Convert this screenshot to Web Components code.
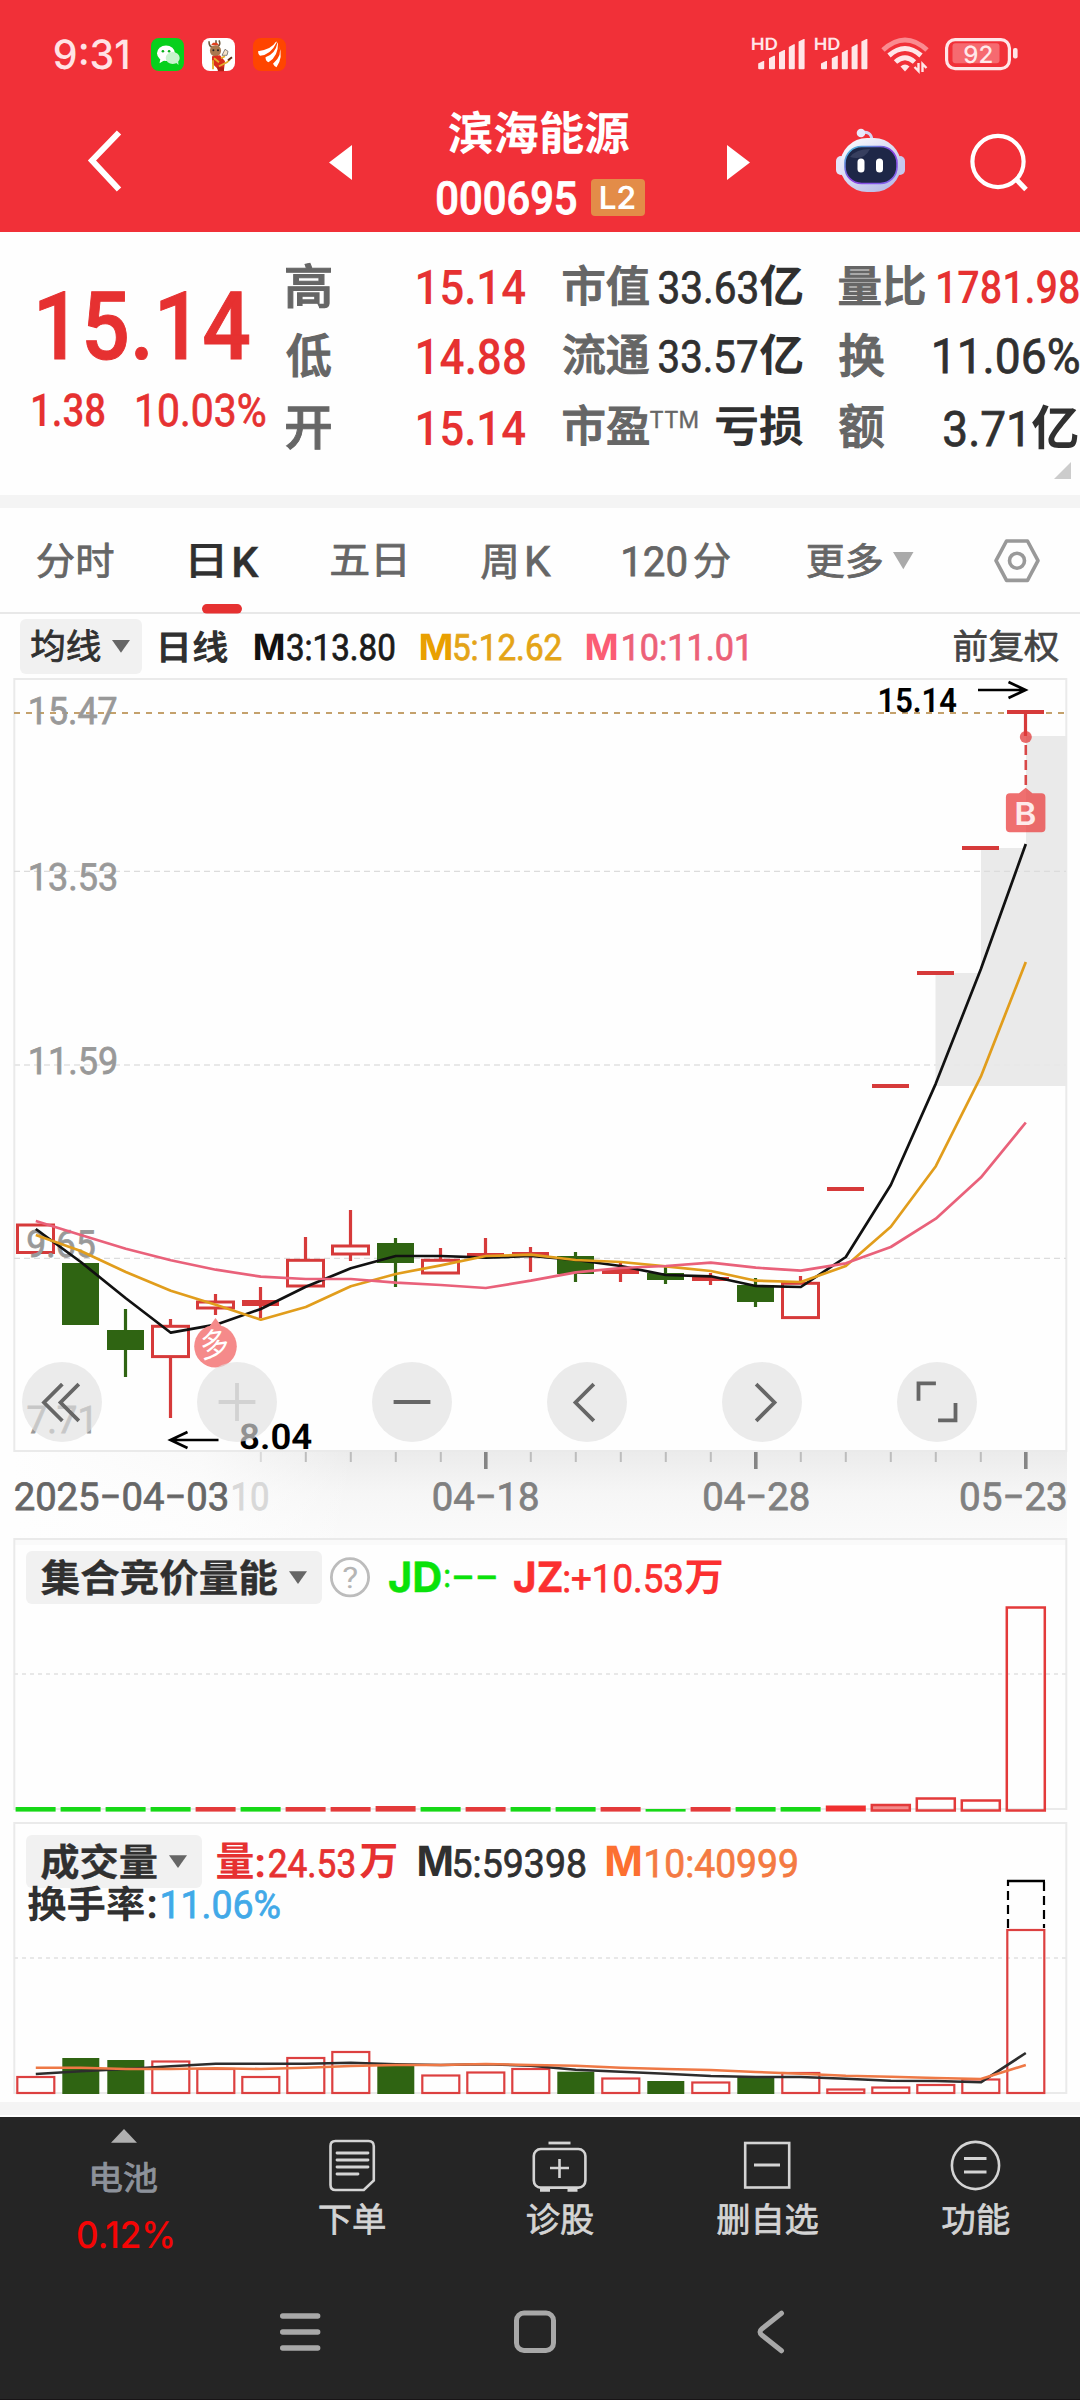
<!DOCTYPE html>
<html lang="zh-CN">
<head>
<meta charset="utf-8">
<title>滨海能源 000695</title>
<style>
html,body{margin:0;padding:0;background:#fefefe}
body{width:1080px;height:2400px;overflow:hidden;font-family:Roboto,"Noto Sans CJK SC",sans-serif}
</style>
</head>
<body>
<stock-app></stock-app>
<script>
const NUM='Roboto, "Noto Sans CJK SC", sans-serif';
const UI='Inter, "Noto Sans CJK SC", sans-serif';
const ctx=document.createElement('canvas').getContext('2d');
const r2=n=>Math.round(n*100)/100;

/* A <text> whose inked area fills the box x0..x1, y0..y1 */
function inkText(x0,x1,y0,y1,s,o={}){
  const font=o.font||NUM; let wt=+(o.w||400), sw=+(o.st||0);
  /* medium CJK has no face of its own: thicken the regular one */
  if(wt===500&&/[\u4e00-\u9fff]/.test(s)&&!sw)sw=1.1;
  /* small medium digits sit between the regular and medium faces */
  else if(wt===500&&font===NUM&&!sw){wt=400;sw=.75}
  ctx.font=`${wt} 200px ${font}`;
  const m=ctx.measureText(s);
  x0+=sw/2;x1-=sw/2;y0+=sw/2;y1-=sw/2;
  const ih=m.actualBoundingBoxAscent+m.actualBoundingBoxDescent;
  const iw=m.actualBoundingBoxRight+m.actualBoundingBoxLeft;
  const fs=(y1-y0)*200/ih, k=fs/200;
  const sx=(x1-x0)/(iw*k);
  const bx=x0+m.actualBoundingBoxLeft*k*sx, by=y0+m.actualBoundingBoxAscent*k;
  const st=sw?` stroke="${o.fill}" stroke-width="${sw}"`:'';
  return `<text text-rendering="geometricPrecision" transform="translate(${r2(bx)} ${r2(by)}) scale(${sx.toFixed(4)} 1)${o.rot?` rotate(${o.rot})`:''}" font-family='${font}' font-size="${r2(fs)}" font-weight="${wt}" fill="${o.fill}"${st}>${s}</text>`;
}

class FitText extends HTMLElement{
  connectedCallback(){
    const a=n=>this.getAttribute(n), w=+a('w'), h=+a('h');
    const o={fill:a('fill'),w:a('weight')||400,st:a('st'),font:a('ui')!==null?UI:NUM};
    this.attachShadow({mode:'open'}).innerHTML=`<style>:host{display:block;flex:none;width:${w}px;height:${h}px}svg{display:block;overflow:visible}</style><svg width="${w}" height="${h}">${inkText(0,w,0,h,a('text'),o)}</svg>`;
  }
}
customElements.define('fit-text',FitText);

const T=(x0,x1,y0,y1,text,fill,weight=400,st='',ui='')=>({x0,x1,y0,html:m=>`<fit-text style="${m}" w="${r2(x1-x0)}" h="${r2(y1-y0)}" text="${text}" fill="${fill}" weight="${weight}" ${st?`st="${st}"`:''} ${ui}></fit-text>`});
const G=(x0,x1,y0,y1,inner)=>({x0,x1,y0,html:m=>`<svg style="${m}" width="${r2(x1-x0)}" height="${r2(y1-y0)}" viewBox="${x0} ${y0} ${r2(x1-x0)} ${r2(y1-y0)}">${inner}</svg>`});
const B=(x0,x1,y0,y1,style,kids)=>({x0,x1,y0,html:m=>`<div class="row" style="${m};width:${r2(x1-x0)}px;height:${r2(y1-y0)}px;${style}">${fill(kids,x0,y0)}</div>`});
function fill(items,px,py){let x=px;return items.map(i=>{const s=`margin:${r2(i.y0-py)}px 0 0 ${r2(i.x0-x)}px`;x=i.x1;return i.html(s)}).join('')}
const row=(y0,y1,items,style='')=>`<div class="row" style="height:${r2(y1-y0)}px;${style}">${fill(items,0,y0)}</div>`;
const CSS=`:host{display:block;flex:none;width:1080px}.row{display:flex;align-items:flex-start;box-sizing:border-box}svg{display:block;flex:none;overflow:visible}fit-text{flex:none}`;
function define(name,css,html){customElements.define(name,class extends HTMLElement{connectedCallback(){this.attachShadow({mode:'open'}).innerHTML=`<style>${CSS}${css}</style>${html()}`}})}

/* ---------- status bar and title ---------- */
const bars=x=>[[0,61],[10.8,55.7],[20.8,50],[30.6,44.3],[40.4,39]].map(([d,y])=>`<path d="M${x+d} ${y+2.6}l5-2.6h1v${r2(69.3-y-1)}q0 1-1 1h-4q-1 0-1-1z" fill="#ffe6e8"/>`).join('');
define('status-bar','',()=>row(0,96,[
 T(55,127.5,39.3,69.7,'9:31','#ffe3e5',500,'','ui'),
 G(150.5,183.5,37.7,70.7,`<rect x="150.5" y="37.7" width="33" height="33" rx="8" fill="#07d01c"/><g fill="#fff"><ellipse cx="165.5" cy="53" rx="9" ry="7.8"/><path d="M160 58l-1 5 5-3z"/></g><g fill="#c9f3ce"><ellipse cx="172.2" cy="57.8" rx="7" ry="6"/><path d="M175 62l3 2.6-.4-4z"/></g><circle cx="162.4" cy="51" r="1.3" fill="#07b018"/><circle cx="168.6" cy="51" r="1.3" fill="#07b018"/>`),
 G(202,235,37.7,70.7,`<rect x="202" y="37.7" width="33" height="33" rx="8" fill="#fff"/><path d="M209 41q0 5 3 6l6-1q3-2 1-6M216 43v-3" fill="none" stroke="#6c5a3e" stroke-width="1.6"/><ellipse cx="215.5" cy="50.5" rx="5.6" ry="5.6" fill="#a8794f"/><path d="M211 45h8l-2-2.500h-4z" fill="#e0401c"/><circle cx="213.400" cy="50" r="1" fill="#222"/><circle cx="218" cy="50" r="1" fill="#222"/><path d="M212 56l8-1 5 6-1 8h-6l-6-6z" fill="#d92d1c"/><path d="M214 58l5 4M225 56l-4 2M213 69v-9M219 66l8-4 3-3" stroke="#e4b12d" stroke-width="1.800" fill="none"/><path d="M222 55l3-6 3 2-1 4z" fill="#f6e3cb" stroke="#555" stroke-width=".7"/><path d="M228 60l4-3" stroke="#5e2a18" stroke-width="2"/><path d="M217 67h7v4h-6z" fill="#b21f17"/>`),
 G(253,286,37.7,70.7,`<rect x="253" y="37.7" width="33" height="33" rx="8" fill="#ff4500"/><g fill="#fff"><path d="M276 41.500q-5 8-18 9.500q0 3 2 4.500q11-1 17-14z"/><path d="M277.500 42.500q-2 11-12 14.500q0 4 3 5q10-6 9.500-19.500z"/><path d="M279 45q4 10-6 18.500q1.500 3 3.500 3.500q7-10 2.500-22z"/></g>`),
 G(751.8,804.6,37,70,inkText(751.8,777,37.3,49.7,'HD',{fill:'#ffe6e8',w:600,font:UI})+bars(758)),
 G(815,868,37,70,inkText(815,839.6,37.3,49.7,'HD',{fill:'#ffe6e8',w:600,font:UI})+bars(821)),
 G(881,929.5,36,72,`<g fill="none" stroke="#ffe6e8" stroke-width="5"><path d="M883 50q22-20 44 0" stroke="#fa8b90"/><path d="M889 55.500q16-14 32 0"/><path d="M895.500 62q9.500-8.500 19 0"/></g><path d="M900.500 66.500q4.500-4 9 0l-4.500 5z" fill="#ffe6e8"/><path d="M914.500 67l4 4v-8M922.500 72v-8l4 4" fill="none" stroke="#ffe6e8" stroke-width="2.400"/>`),
 G(945,1018,37.7,69.7,`<rect x="946.600" y="39.300" width="62.800" height="29" rx="8.500" fill="none" stroke="#ffe6e8" stroke-width="3.200"/><rect x="952.500" y="43" width="47" height="20" rx="3" fill="#f66a70"/><rect x="1013" y="47.700" width="4.600" height="10.600" rx="2" fill="#ffe6e8"/>`+inkText(964.6,991.8,45.3,63.3,'92',{fill:'#ffe9ea',w:500,font:UI}))
]));
define('title-bar','.mid{display:flex;flex-direction:column}',()=>row(96,232,[
 G(88,121,130,192,`<path d="M119 132.500L92 160.500L119 189.500" fill="none" stroke="#fff" stroke-width="6"/>`),
 G(329,352,145,180,`<path d="M352 145v35l-23-17.500z" fill="#fff"/>`),
 {x0:436.6,x1:645,y0:110,html:m=>`<div class="mid" style="${m};width:208.4px"><div class="row" style="height:69.3px">${fill([T(449.4,629.5,110,154,'滨海能源','#fff',700)],436.6,110)}</div><div class="row">${fill([T(436.6,576,180.6,215,'000695','#fff',500,.9),B(591,645,179.3,216,'background:#e38c48;border-radius:4px',[T(601.3,634.7,186.5,209.7,'L2','#fff',600,'','ui')])],436.6,179.3)}</div></div>`},
 G(727,750,145,180,`<path d="M727 145v35l23-17.500z" fill="#fff"/>`),
 G(836,905,129,192,`<defs><linearGradient id="h" x1="0" y1="0" x2=".7" y2="1"><stop offset="0" stop-color="#fff"/><stop offset="1" stop-color="#b9bce8"/></linearGradient><linearGradient id="p" x1="0" y1="0" x2="1" y2="1"><stop offset="0" stop-color="#41c6d8"/><stop offset=".5" stop-color="#8a3fe0"/><stop offset="1" stop-color="#7f6af0"/></linearGradient></defs><path d="M860 133q11-3 12 7" fill="none" stroke="#d5d4f2" stroke-width="3"/><circle cx="861" cy="133" r="4.300" fill="#e9e9fb"/><rect x="836" y="156" width="10" height="19" rx="5" fill="#e4e4fa"/><rect x="895" y="156" width="10" height="19" rx="5" fill="#c6c8ee"/><rect x="840" y="138" width="61" height="54" rx="27" fill="url(#h)"/><rect x="845" y="146.500" width="52" height="37" rx="16.500" fill="#1e2747" stroke="url(#p)" stroke-width="1.600"/><path d="M850 157q6-8 20-8q-6 12-20 8" fill="#47506f" opacity=".6"/><rect x="857.500" y="158.500" width="7" height="14" rx="3.500" fill="#fff"/><rect x="876" y="158.500" width="7" height="14" rx="3.500" fill="#fff"/>`),
 G(970,1028,133,191,`<circle cx="998" cy="161.500" r="25.600" fill="none" stroke="#fff" stroke-width="4.200"/><path d="M1016 179l10 10.500" stroke="#fff" stroke-width="5"/>`)
]));

/* ---------- quote panel ---------- */
const R='#e63131',L='#666',D='#303030';
define('quote-panel',':host{display:flex;height:263px;background:#fefefe}.big{width:285.5px}.col{flex:1}',()=>{
 const big=`<div class="big">${row(232,393.3,[T(39,249.5,290,360,'15.14',R,500,1)])}${row(393.3,495,[T(32.7,104,393.3,427,'1.38',R,500,.2),T(136.7,265,393.3,427,'10.03%',R,500)])}</div>`;
 const s=(y0,y1,it)=>`<div class="row" style="height:${y1-y0}px">${fill(it,285.5,y0)}</div>`;
 return big+`<div class="col">`+
 s(232,325,[T(285.5,330.6,262.3,308.7,'高',L,500),T(417.7,524.8,270,305,'15.14',R,500,.1),T(562.7,648.8,264,306.3,'市值',L,500),T(658.8,757,270.3,303.7,'33.63',D,500),T(760,802.4,264,306,'亿',D,700),T(839.2,925.2,264.7,306,'量比',L,500),T(938,1078.6,270.3,303.7,'1781.98',R,500,.1)])+
 s(325,396,[T(285.5,330.6,331.7,377.3,'低',L,500),T(417.7,524.6,338,374.3,'14.88',R,500,.1),T(562.7,648.8,332.7,375.3,'流通',L,500),T(658.8,757,339.7,373,'33.57',D,500),T(760,802.4,333,374.7,'亿',D,700),T(839.2,884.5,332,377.3,'换',L,500),T(933.6,1078.6,338,374.3,'11.06%',D,500)])+
 s(396,460,[T(285.5,330.6,405.7,449.7,'开',L,500),T(417.7,524.8,411,446,'15.14',R,500,.1),T(562.7,648.8,403.7,446.3,'市盈',L,500),T(650.5,698,410.7,428.3,'TTM',L,400,.4,'ui'),T(715.6,802.4,405,446.3,'亏损',D,700),T(839.2,884.5,403.3,449.3,'额',L,500),T(944,1023,410,446.7,'3.71',D,500),T(1032,1077.5,403.7,448.7,'亿',D,700)])+
 s(460,495,[G(1054,1071,462,479,`<path d="M1071 462v17h-17z" fill="#ccc"/>`)])+`</div>`;
});

/* ---------- period tabs and moving averages ---------- */
define('period-tabs',':host{height:106px;background:#fefefe;box-sizing:border-box;border-bottom:2px solid #e8e8e8}',()=>
 row(508,604,[T(36.5,113,542.3,579,'分时',L,400,.8),T(190.8,221.8,544.3,579,'日',D,500,.4),T(234,259,546,576.7,'K',D,500,.4),T(330.6,404.3,544.3,578,'五日',L,400,.8),T(480.7,515.2,543.5,579,'周',L,400,.8),T(527,551,546,576.7,'K',L,500),T(623.3,686.6,546,577,'120',L,500),T(694,730,542.3,579,'分',L,400,.8),T(807,882,543,579,'更多',L,400,.8),
 G(893,913,552,569.3,`<path d="M893 552h20.500l-10.200 17.300z" fill="#aaa"/>`),
 G(994,1040,539.3,582.7,`<path d="M1006.500 541.300h21l10.500 19.700l-10.500 19.700h-21l-10.500-19.700z" fill="none" stroke="#999" stroke-width="3.600" stroke-linejoin="round"/><circle cx="1017" cy="561" r="7.500" fill="none" stroke="#999" stroke-width="3.600"/>`)])+
 row(604,612,[G(202,242,604,614,`<rect x="202" y="604" width="40" height="9.600" rx="4.800" fill="${R}"/>`)]));
define('ma-legend',':host{height:64px;background:#fefefe}',()=>row(614,678,[
 B(20,142,619,674,'background:#f1f1f1;border-radius:6px',[T(31,100.5,629.3,662.7,'均线',D,400,.8),G(111.6,129.5,640,652.7,`<path d="M111.600 640h18l-9 12.700z" fill="#666"/>`)]),
 T(160.5,227,630,663.3,'日线',D,700),T(254.8,283,633.8,660.2,'M','#111',700,'','ui'),T(287,394.6,633.3,660.7,'3:13.80','#1b1b1b',500),
 T(420.8,451,633.8,660.2,'M','#e9a000',700,'','ui'),T(454.5,562,633.3,660.7,'5:12.62','#e4a417',500),
 T(587.5,617,633.8,660.2,'M','#fb5c74',700,'','ui'),T(623.3,747,633.3,660.7,'10:11.01','#ec6178',500),
 T(953.9,1058.5,629.3,662.7,'前复权','#444',400,.7)]));

/* ---------- candlestick chart ---------- */
const X=i=>35.8+45*i;
const line=(ys,c,w=2.7)=>`<polyline points="${ys.map((y,i)=>X(i)+','+y).join(' ')}" fill="none" stroke="${c}" stroke-width="${w}" stroke-linejoin="round"/>`;
const RED='#d63a3a',GRN='#2f6412';
const frame=(y0,y1)=>`<rect x="14.300" y="${y0}" width="1052" height="${y1-y0}" fill="none" stroke="#eaeaea" stroke-width="2"/>`;
/* index, kind (h hollow, f red, g green), body top, body bottom, wick top, wick bottom */
const K=[[0,'h',1225,1252.5],[1,'g',1263,1325],[2,'g',1330,1350,1309,1377],[3,'h',1326.3,1356.6,1319,1418],[4,'h',1302,1308,1294,1315],[5,'f',1300,1306,1287,1318],[6,'h',1260.3,1286,1237,1286],[7,'h',1246,1254,1210,1261],[8,'g',1243,1263,1238,1287],[9,'h',1260.3,1273,1248,1273],[10,'f',1253,1257,1238,1257],[11,'f',1252,1256,1247,1272],[12,'g',1256,1274,1252,1282],[13,'f',1269,1274,1263,1282],[14,'g',1273,1280,1265,1284],[15,'f',1277,1281,1273,1285],[16,'g',1285,1302,1278,1307],[17,'h',1283.3,1317.6,1276,1318],[18,'f',1187,1191],[19,'f',1084,1088],[20,'f',971,975],[21,'f',846,850],[22,'f',710,714,712,736]];
const candle=([i,k,t,b,wt,wb])=>{const x=X(i)-.3,c=k==='g'?GRN:RED;
 let s='';
 if(wt&&k==='h')s+=`<path d="M${x} ${wt}V${t}M${x} ${b}V${wb}" stroke="${c}" stroke-width="3.200"/>`;
 else if(wt)s+=`<path d="M${x} ${wt}V${wb}" stroke="${c}" stroke-width="3.200"/>`;
 return s+(k==='h'?`<rect x="${x-18}" y="${t}" width="36" height="${r2(b-t)}" fill="none" stroke="${c}" stroke-width="3"/>`:`<rect x="${x-18.5}" y="${t}" width="37" height="${b-t}" fill="${c}"/>`)};
const yl=(y,s,x0=30.3,x1=116.4)=>inkText(x0,x1,y-14.2,y+14.2,s,{fill:'#999',w:500});
const btn=(cx,inner)=>G(cx-40,cx+40,1362,1442,`<circle cx="${cx}" cy="1402" r="40" fill="rgba(224,224,224,.65)"/><g fill="none" stroke="#666" stroke-width="3.800" stroke-linecap="square">${inner}</g>`);
define('candle-chart',':host{display:grid;height:860px;background:#fefefe}:host>*{grid-area:1/1}.ctl{align-self:start}',()=>
`<svg width="1080" height="860" viewBox="0 678 1080 860"><defs>
 <linearGradient id="v" x1="0" y1="0" x2="0" y2="1"><stop offset="0" stop-color="#ebebeb"/><stop offset=".45" stop-color="#f6f6f6"/><stop offset="1" stop-color="#fbfbfb"/></linearGradient>
 <linearGradient id="f" x1="0" y1="0" x2="1" y2="0"><stop offset="0" stop-color="#fefefe"/><stop offset=".55" stop-color="#fefefe" stop-opacity=".75"/><stop offset="1" stop-color="#fefefe" stop-opacity="0"/></linearGradient></defs>
 <rect x="14" y="1451" width="1053" height="94" fill="url(#v)"/><rect x="14" y="1451" width="340" height="94" fill="url(#f)"/>
 <path d="M935.500 973H981V848h45V736h41v350H935.500z" fill="#eaeaea"/>
 ${frame(679,1451)}
 <g stroke="#dcdcdc" stroke-width="1.200" stroke-dasharray="6 4"><path d="M14 871.400H1066M14 1258.300H1066"/><path d="M14 1065H1066" stroke="#e8e8e8"  stroke-width="2"/></g>
 <path d="M14 713H1066" stroke="#c4a16c" stroke-width="2" stroke-dasharray="6 6"/>
 ${K.map(candle).join('')}
 ${yl(711,'15.47')}${yl(876.3,'13.53')}${yl(1060.5,'11.59')}${yl(1244,'9.65',27.5,94.7)}${yl(1419,'7.71',27.5,91)}
 ${line([1229,1262,1298.3,1332.7,1324.7,1309,1286.7,1268.3,1256,1256,1257.7,1256,1260,1266,1275,1276.3,1286,1287,1257,1185,1083.6,969.2,844],'#111')}
 ${line([1235,1251,1272,1290.7,1304.7,1319.7,1307,1286.3,1274,1265.3,1256,1254.7,1260,1262,1266.3,1271,1280.7,1282,1266,1226.7,1166.2,1076.7,962],'#e19d1c')}
 ${line([1221,1235,1248.7,1260.3,1269.7,1276.7,1279,1279,1282.7,1285,1288,1280.7,1272.3,1268,1266,1262.7,1267.7,1270.7,1263.3,1247,1218.7,1177.6,1122.5],'#e9617a')}
 ${inkText(880,956,687.2,712,'15.14',{fill:'#000',w:600,st:.1})}
 <path d="M978 690h47M1008.500 682l17 8l-17 8M218.500 1440h-47M187.500 1432l-17 8l17 8" fill="none" stroke="#000" stroke-width="2.700"/>
 ${inkText(240.7,311.3,1423,1449,'8.04',{fill:'#000',w:600})}
 <circle cx="1025.800" cy="737" r="6" fill="#e23a3a" opacity=".75"/><path d="M1025.800 745V789" stroke="#d84848" stroke-width="2.600" stroke-dasharray="10 5"/>
 <path d="M1010 793.300h9l6.700-5.500l6.700 5.500h9q4 0 4 4v31q0 4-4 4h-31.500q-4 0-4-4v-31q0-4 4-4z" fill="#e93d3d" opacity=".74"/>
 ${inkText(1016.7,1035,801.5,824.7,'B',{fill:'#fdeaea',w:600,font:UI})}
 <path d="M209 1327l6.500-9l6.500 9" fill="#f58a8a"/><circle cx="215.500" cy="1346.300" r="21.300" fill="#f58a8a"/>
 ${inkText(203.500,229,1331,1361,'多',{fill:'#fff',w:400,rot:-8})}
 ${[5,6,7,8,9,11,12,13,14,15,17,18,19,20,21].map(i=>`<path d="M${X(i)} 1452v10" stroke="${i<6?'#d9d9d9':'#bdbdbd'}" stroke-width="2"/>`).join('')}
 ${[10,16,22].map(i=>`<path d="M${X(i)} 1452v17" stroke="#858585" stroke-width="3.600"/>`).join('')}
 ${inkText(15,227.3,1482,1511,'2025−04−03',{fill:L,w:500})}${inkText(232.8,268,1482,1511,'10',{fill:'#d8d8d8',w:500})}
 ${inkText(433.5,538,1482,1511,'04−18',{fill:'#808080',w:500})}${inkText(704,808.6,1482,1511,'04−28',{fill:'#808080',w:500})}${inkText(960.8,1065.8,1482,1511,'05−23',{fill:'#808080',w:500})}
</svg><div class="ctl">`+row(678,1442,[
 btn(62,`<path d="M61 1385.500l-17 17l17 17M77.500 1385.500l-17 17l17 17"/>`),
 btn(237,`<path d="M220.500 1402h33M237 1385v34" stroke="#d2d2d2"/>`),
 btn(412,`<path d="M395.500 1402h33"/>`),
 btn(587,`<path d="M592.500 1385.500l-17 17l17 17"/>`),
 btn(762,`<path d="M757.500 1385.500l17 17l-17 17"/>`),
 btn(937,`<path d="M934 1383.300h-15.500v15.500M940 1420.300h15.500v-15.500"/>`)])+`</div>`);

/* ---------- auction volume ---------- */
const chip=(x1,y0,y1,t0,t1,text,tx,a)=>B(26,x1,y0,y1,'background:#f1f1f1;border-radius:6px',[T(41.3,tx,t0,t1,text,D,600,.3),G(a,a+18,y0+20,y0+33,`<path d="M${a} ${y0+20.300}h18l-9 12.700z" fill="#666"/>`)]);
define('auction-chart',':host{display:grid;height:284px}:host>*{grid-area:1/1}',()=>{
 const P='#e33a3a',kinds='GGGGRGRRTGRGGRgRGG';
 let b='';[...kinds].forEach((k,i)=>{const x=X(i)-20.2,g=k==='G'||k==='g',t=k==='T'?1806:k==='g'?1809:1807;
  b+=`<rect x="${x}" y="${t}" width="40" height="${1811.600-t}" fill="${g?'#16d816':P}"/>`});
 b+=`<rect x="${X(18)-20}" y="1805.500" width="40" height="6" fill="#f03030"/>`;
 [[19,1805,'#f28a8a'],[20,1798.500,'none'],[21,1800.500,'none'],[22,1607.500,'none']].forEach(([i,t,f])=>b+=`<rect x="${X(i)-19}" y="${t}" width="38" height="${1810.500-t}" fill="${f}" stroke="${P}" stroke-width="2.500"/>`);
 return `<svg width="1080" height="284" viewBox="0 1538 1080 284"><rect x="14" y="1538" width="1053" height="7" fill="#fafafa"/>${frame(1539,1809)}<path d="M14 1674H1066" stroke="#e8e8e8" stroke-width="2" stroke-dasharray="4 4"/>${b}</svg>`+
 row(1538,1610,[chip(321.6,1551,1604,1558.7,1596,'集合竞价量能',277.5,288.6),
 G(330,370,1557,1597,`<circle cx="350" cy="1577.300" r="18.600" fill="none" stroke="#bcbcbc" stroke-width="2.800"/>`+inkText(343.5,357,1566.5,1588,'?',{fill:'#b5b5b5',w:400})),
 T(389,440.8,1561.3,1592.7,'JD','#0ae20a',700,.5,'ui'),T(445,449.5,1569,1587,':','#0ae20a',500,.5),T(454,496,1576,1579.8,'−−','#0ae20a',500,.5),
 T(513.8,561.3,1561.3,1592.7,'JZ','#fb3030',700,.5,'ui'),T(564,682,1563.6,1592.7,':+10.53','#fb3030',500),T(685.3,721.8,1560,1594.5,'万','#fb3030',700)]);
});

/* ---------- traded volume ---------- */
define('volume-chart',':host{display:grid;height:280px}:host>*{grid-area:1/1}',()=>{
 const tops=[2077,2058,2060,2061.5,2069,2077,2058,2052,2065,2075.5,2072.5,2069,2071.7,2078.5,2081,2082.5,2076.7,2073,2089.5,2087.5,2085,2079.5,1930],green=[1,2,8,12,14,16];
 const b=tops.map((t,i)=>green.includes(i)?`<rect x="${X(i)-18.500}" y="${t}" width="37" height="${2094-t}" fill="${GRN}"/>`:`<rect x="${X(i)-18.500}" y="${t}" width="37" height="${2093-t}" fill="none" stroke="#dc4040" stroke-width="2.200"/>`).join('');
 return `<svg width="1080" height="280" viewBox="0 1822 1080 280">${frame(1823,2093)}<path d="M14 1958H1066" stroke="#e8e8e8" stroke-width="2" stroke-dasharray="4 4"/>${b}
 <path d="M1008 1928V1881H1044V1928" fill="none" stroke="#000" stroke-width="2.200" stroke-dasharray="9 5"/><path d="M1007 1881h38" stroke="#000" stroke-width="2.400"/>
 ${line([2074,2071.3,2069,2066.3,2063.7,2063.7,2063.7,2062.7,2064.3,2065,2064.3,2065.7,2069.7,2071.7,2073.7,2076,2077,2077,2078.7,2080.7,2081,2082.3,2053],'#2d2d2d',2.6)}
 ${line([2067.7,2067.7,2069,2069,2068.3,2069,2067.7,2066,2065,2065,2064,2065,2065.7,2067.7,2069,2070,2072,2073.7,2075.7,2076.7,2078,2079,2065],'#ee7845',2.6)}</svg><div>`+
 row(1822,1884,[chip(202,1835,1888,1842.7,1880,'成交量',157,168.7),T(217,252.8,1842,1878.5,'量',R,700),T(257.5,264,1855,1877.5,':',R,700),T(269.3,354.7,1847.7,1877,'24.53',R,500),T(360,396,1843.7,1878.7,'万',R,700),
 T(418.7,451,1846.2,1876.5,'M',D,700,'','ui'),T(454.5,586,1847.7,1877,'5:59398',D,500),T(606.7,640,1846.2,1876.5,'M','#fc7030',700,'','ui'),T(646,797,1847.7,1877,'10:40999','#f47a42',500)])+
 row(1884,1922,[T(27.5,143.3,1884.8,1921.2,'换手率',D,700),T(149,155.4,1895.5,1918,':',D,700),T(162.5,280.3,1889.6,1918.5,'11.06%','#41a9e8',500)])+`</div>`;
});

/* ---------- bottom bars ---------- */
const W='#d4d4d4';
define('bottom-bar',':host{height:153px;background:#252525}',()=>row(2117,2200,[
 {x0:78,x1:172.5,y0:2117,html:m=>`<div style="${m};width:94.5px;height:83px">${`<div class="row" style="height:38px">${fill([G(111,137,2129.3,2143,`<path d="M124 2129.300l13 13.700h-26z" fill="#b0b0b0"/>`)],78,2117)}</div><div class="row">${fill([T(92.3,157.4,2160.7,2192,'电池','#8d929b',400,.8)],78,2155)}</div>`}</div>`},
 G(329,376,2139,2192,`<path d="M335.500 2141h33q5.300 0 5.300 5.300v34.200l-10 9.500h-28.300q-5 0-5-5v-39q0-5 5-5z" fill="none" stroke="${W}" stroke-width="2.600"/><path d="M337 2153h31M337 2160h31M337 2167h31M337 2174h21" stroke="${W}" stroke-width="2.800" stroke-linecap="round"/>`),
 G(532,587,2141,2192,`<rect x="533.800" y="2149" width="51.600" height="38.600" rx="7" fill="none" stroke="${W}" stroke-width="2.600"/><path d="M548.500 2143h22" stroke="${W}" stroke-width="2.800"/><path d="M550 2168h19M559.500 2159v19" stroke="${W}" stroke-width="2.600"/><path d="M540 2190h10M567.500 2190h10" stroke="${W}" stroke-width="3.600"/>`),
 G(744,790,2141,2189,`<rect x="745.200" y="2143" width="44" height="44.500" fill="none" stroke="${W}" stroke-width="2.600"/><path d="M754 2165h26" stroke="${W}" stroke-width="3"/>`),
 G(950,1001,2140,2191,`<circle cx="975.500" cy="2165.500" r="23.600" fill="none" stroke="${W}" stroke-width="2.600"/><path d="M964 2158.500h22.500M964 2172h22.500" stroke="${W}" stroke-width="2.800"/>`)])+
 row(2200,2270,[T(78,172.5,2221.3,2249,'0.12%','#f50505',500,'','ui'),T(319,385,2203.3,2235.7,'下单',W,400,.7),T(527,593.4,2203.3,2235.7,'诊股',W,400,.7),T(717,818.2,2203.3,2235.7,'删自选',W,400,.7),T(942,1009.4,2203.3,2235.7,'功能',W,400,.7)]));
define('system-nav',':host{height:130px;background:#252525;box-sizing:border-box;border-bottom:1px solid #181416}',()=>row(2270,2399,[
 G(280,320,2313,2351,`<path d="M282.700 2316h35M282.700 2332h35M282.700 2348h35" stroke="#a8a8a8" stroke-width="5.400" stroke-linecap="round"/>`),
 G(514,556,2310,2353,`<rect x="516.500" y="2313" width="37" height="37.500" rx="7.500" fill="none" stroke="#a8a8a8" stroke-width="5"/>`),
 G(757,785,2310,2354,`<path d="M781.500 2313.200l-19.500 15.600q-4 3.200 0 6.400l19.500 15.600" fill="none" stroke="#a8a8a8" stroke-width="5" stroke-linecap="round"/>`)]));

define('stock-app',':host{display:flex;flex-direction:column;height:2400px;background:#fefefe}.head{background:#f13038;height:232px}.band{height:13px;background:#f4f4f4}.gap{height:2px}',()=>
`<div class="head"><status-bar></status-bar><title-bar></title-bar></div><quote-panel></quote-panel><div class="band"></div><period-tabs></period-tabs><ma-legend></ma-legend><candle-chart></candle-chart><auction-chart></auction-chart><volume-chart></volume-chart><div class="band"></div><div class="gap"></div><bottom-bar></bottom-bar><system-nav></system-nav>`);
</script>
</body>
</html>
